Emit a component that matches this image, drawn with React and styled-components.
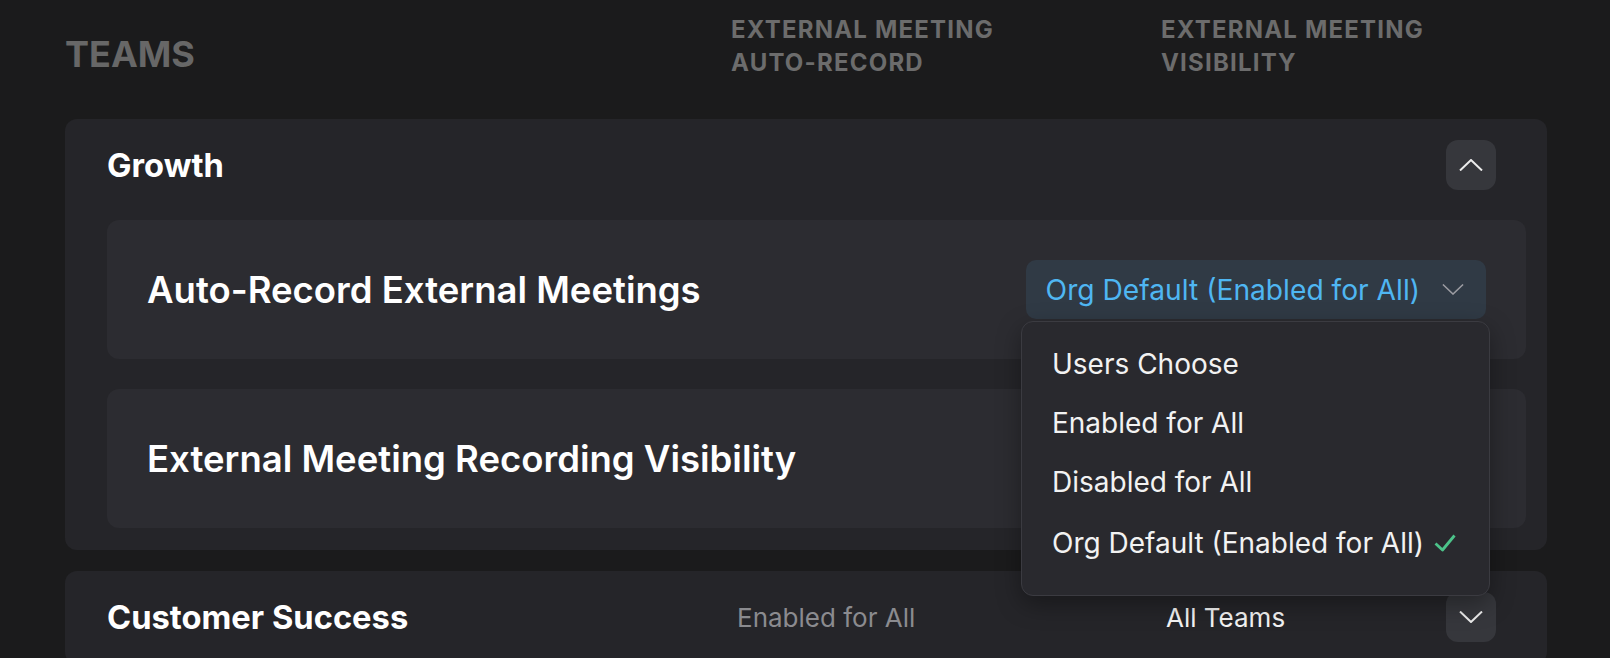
import styled, { createGlobalStyle } from 'styled-components'

const GlobalStyle = createGlobalStyle`
  body {
    margin: 0;
    background: #1b1b1c;
    font-family: Inter, "Noto Sans", sans-serif;
  }
`

const Page = styled.div`
  width: 1610px;
  box-sizing: border-box;
  padding: 0 63px 0 65px;
`

const HeaderRow = styled.div`
  display: grid;
  grid-template-columns: 666px 430px 1fr;
  align-items: start;
  height: 119px;
  box-sizing: border-box;
  padding-top: 13px;
`

const TeamsLabel = styled.div`
  margin-top: 19px;
  font-size: 36px;
  line-height: 44px;
  font-weight: 700;
  color: #676767;
  text-transform: uppercase;
`

const ColumnLabel = styled.div`
  max-width: 300px;
  font-size: 24px;
  line-height: 33px;
  font-weight: 700;
  letter-spacing: 1.2px;
  color: #6c6c6c;
  text-transform: uppercase;
`

const Card = styled.div`
  display: flex;
  flex-direction: column;
  gap: 30px;
  margin-bottom: 21px;
  padding: 21px 21px 22px 42px;
  background: #252529;
  border-radius: 12px;
`

const CardHeader = styled.div`
  display: grid;
  grid-template-columns: 630px 429px 1fr 50px;
  align-items: center;
  padding-right: 30px;
`

const CardTitle = styled.div`
  font-size: 32.7px;
  font-weight: 700;
  color: #ffffff;
`

const CellValue = styled.div`
  font-size: 26px;
  color: ${(p) => (p.$muted ? '#8b8b8f' : '#f4f4f4')};
`

const ChevronButton = styled.button`
  grid-column: 4;
  display: flex;
  align-items: center;
  justify-content: center;
  width: 50px;
  height: 50px;
  padding: 0;
  border: none;
  border-radius: 12px;
  background: #36373c;
  color: #ececec;
`

const SettingRow = styled.div`
  position: relative;
  display: flex;
  align-items: center;
  justify-content: space-between;
  height: 139px;
  padding: 0 40px;
  background: #2c2c31;
  border-radius: 12px;
`

const SettingTitle = styled.div`
  font-size: 36.5px;
  font-weight: 600;
  color: #ffffff;
`

const SelectWrap = styled.div`
  position: relative;
`

const SelectButton = styled.div`
  display: flex;
  align-items: center;
  gap: 22px;
  height: 59px;
  padding: 0 22px 0 20px;
  background: #303a45;
  border-radius: 10px;
  color: #4fb6f2;
  font-size: 28.2px;
  white-space: nowrap;
`

const Menu = styled.div`
  position: absolute;
  top: calc(100% + 2px);
  right: -4px;
  z-index: 10;
  width: 469px;
  box-sizing: border-box;
  padding: 12px 0 23px;
  background: #29292e;
  border: 1px solid #3b3b41;
  border-radius: 12px;
  box-shadow: 0 8px 24px rgba(0, 0, 0, 0.35);
`

const MenuItem = styled.div`
  display: flex;
  align-items: center;
  gap: 10px;
  padding: ${(p) => (p.$selected ? '14.5px' : '12.5px')} 30px 12.5px;
  font-size: 28px;
  line-height: 34px;
  color: #f2f2f2;
  white-space: nowrap;
`

const Chevron = ({ up, size = 24, color = 'currentColor', width = 2 }) => (
  <svg width={size} height={size / 2} viewBox="0 0 24 12" fill="none">
    <path
      d={up ? 'M1 11.5 L12 1 L23 11.5' : 'M1 0.5 L12 11 L23 0.5'}
      stroke={color}
      strokeWidth={width}
    />
  </svg>
)

const Check = () => (
  <svg width="22" height="18" viewBox="0 0 22 18" fill="none">
    <polyline
      points="1.5,9.5 8.5,16 20.5,1.5"
      stroke="#4cc38a"
      strokeWidth="2.8"
      strokeLinejoin="round"
    />
  </svg>
)

const options = ['Users Choose', 'Enabled for All', 'Disabled for All', 'Org Default (Enabled for All)']

const Select = ({ value, selected }) => (
  <SelectWrap>
    <SelectButton>
      {value}
      <Chevron size={22} width={1.6} color="#9c9ca2" />
    </SelectButton>
    <Menu>
      {options.map((o) => (
        <MenuItem key={o} $selected={o === selected}>
          {o}
          {o === selected && <Check />}
        </MenuItem>
      ))}
    </Menu>
  </SelectWrap>
)

export default function App() {
  return (
    <Page>
      <GlobalStyle />
      <HeaderRow>
        <TeamsLabel>Teams</TeamsLabel>
        <ColumnLabel>External Meeting Auto-Record</ColumnLabel>
        <ColumnLabel>External Meeting Visibility</ColumnLabel>
      </HeaderRow>

      <Card>
        <CardHeader>
          <CardTitle>Growth</CardTitle>
          <ChevronButton>
            <Chevron up />
          </ChevronButton>
        </CardHeader>
        <SettingRow>
          <SettingTitle>Auto-Record External Meetings</SettingTitle>
          <Select
            value="Org Default (Enabled for All)"
            selected="Org Default (Enabled for All)"
          />
        </SettingRow>
        <SettingRow>
          <SettingTitle>External Meeting Recording Visibility</SettingTitle>
        </SettingRow>
      </Card>

      <Card>
        <CardHeader>
          <CardTitle>Customer Success</CardTitle>
          <CellValue $muted>Enabled for All</CellValue>
          <CellValue>All Teams</CellValue>
          <ChevronButton>
            <Chevron />
          </ChevronButton>
        </CardHeader>
      </Card>
    </Page>
  )
}
